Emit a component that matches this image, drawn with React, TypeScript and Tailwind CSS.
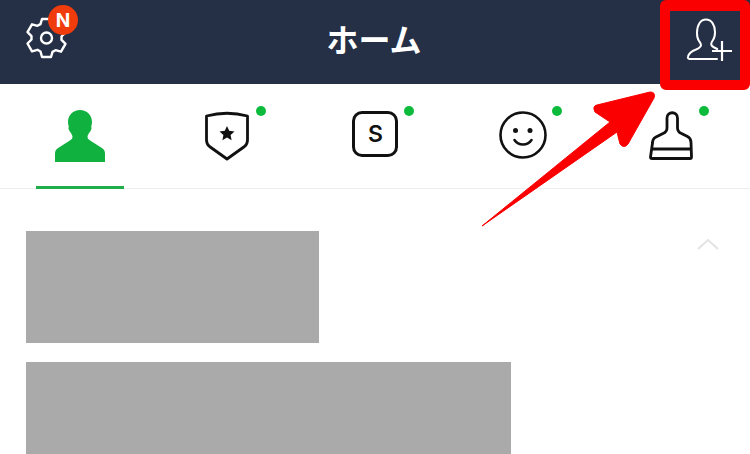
const Tab = ({ children, dot = true, active = false }: { children: React.ReactNode; dot?: boolean; active?: boolean }) => (
  <div className="relative flex flex-1 items-center justify-center h-full">
    <div className="relative w-[60px] h-[60px] flex items-center justify-center">
      {children}
      {dot && <span className="absolute left-[59px] top-0 w-[10px] h-[10px] rounded-full bg-[#0dbb3c]" />}
    </div>
    {active && <span className="absolute left-[30px] right-[30px] bottom-[-1px] h-[3px] bg-[#1fae4a]" />}
  </div>
)

export default function App() {
  return (
    <div className="relative w-[750px] h-[454px] overflow-hidden bg-white font-['Noto_Sans_CJK_JP',sans-serif]">
      {/* Header */}
      <header className="flex items-center justify-between h-[84px] bg-[#252f45] pl-[24px] pr-[16px]">
        <div className="relative w-[46px] h-[46px] mt-[-12px]">
          <svg width="46" height="46" viewBox="0 0 46 46" fill="none" stroke="white" strokeWidth="2.400" strokeLinejoin="round">
            <path d="M18 6h9l1.500 5.500 3 1.700 5.500-1.500 4.500 7.800-4 4v3.400l4 4-4.500 7.800-5.500-1.500-3 1.700L27 44h-9l-1.500-5.500-3-1.700-5.500 1.500-4.500-7.800 4-4v-3.400l-4-4 4.500-7.800 5.500 1.500 3-1.700z" />
            <circle cx="22.500" cy="25" r="5.500" />
          </svg>
          <span className="absolute left-[24px] top-[-8px] flex items-center justify-center w-[30px] h-[30px] rounded-full bg-[#f03c0c] text-white text-[19px] font-bold leading-none font-['Inter',sans-serif]">N</span>
        </div>
        <h1 className="text-white text-[32px] font-semibold leading-none mb-[8px] mr-[8px]">ホーム</h1>
        <svg width="48" height="48" viewBox="0 0 48 48" fill="none" stroke="white" strokeWidth="2" className="mt-[-4px]">
          <path d="M31 43H3.500c-1.300 0-2-1-1.500-2.500 1-3.500 4-5.500 8-7 3-1.300 5-2.500 5-4.500 0-1.500-1-2.500-2-4-1.500-2-2-5-2-8C11 9 14.500 3.500 20 3.500S29 9 29 16c0 3-.5 6-2 8-1 1.500-1.800 2.500-1.800 4 0 1.500 1 2.500 3 3.500l3 1.500" strokeLinecap="round" />
          <path d="M26 35h20M36 25v20" strokeWidth="2.200" />
        </svg>
      </header>

      {/* Tabs */}
      <nav className="flex h-[105px] px-[6px] border-b border-[#eeeeee]">
        <Tab active dot={false}>
          <svg width="50" height="52" viewBox="0 0 50 52" fill="#10b13e">
            <path d="M25 0c7 0 12 5 12 12 0 1.500-.2 3-.8 4.500.6 1 .4 3-1 5-1.300 1.800-2.700 3.500-2.700 5.500 0 1.500 1 2.500 3 3.800l11 7c2 1.300 3.500 3 3.500 5.700V52H0V43.500c0-2.700 1.500-4.400 3.500-5.700l11-7c2-1.300 3-2.300 3-3.800 0-2-1.400-3.700-2.700-5.500-1.400-2-1.600-4-1-5-.6-1.500-.8-3-.8-4.500C13 5 18 0 25 0z" />
          </svg>
        </Tab>
        <Tab>
          <svg width="46" height="52" viewBox="0 0 46 52" className="mt-[-1px]">
            <path d="M2.500 6Q23 .5 43.500 6V30c0 3-1 5-3 6.500L23 49 5.500 36.500c-2-1.500-3-3.500-3-6.500z" fill="none" stroke="#111" strokeWidth="2.800" strokeLinejoin="round" />
            <path d="M23 16l2.200 4.800 5.300.6-3.900 3.600 1 5.200-4.600-2.600-4.600 2.600 1-5.200-3.900-3.600 5.300-.6z" fill="#111" />
          </svg>
        </Tab>
        <Tab>
          <span className="flex items-center justify-center w-[46px] h-[46px] mt-[-4px] ml-[1px] rounded-[10px] border-[3px] border-[#111] text-[#111] text-[23px] font-semibold leading-none font-['Inter',sans-serif]">S</span>
        </Tab>
        <Tab>
          <svg width="48" height="48" viewBox="0 0 48 48" fill="none" stroke="#111" strokeWidth="2.600" className="mt-[-3px]">
            <circle cx="24" cy="24" r="22.500" />
            <circle cx="16.500" cy="19.500" r="2.500" fill="#111" stroke="none" />
            <circle cx="31" cy="19.500" r="2.500" fill="#111" stroke="none" />
            <path d="M15.500 29c2 3 4.500 4.500 8.500 4.500s6.500-1.500 8.500-4.500" strokeLinecap="round" />
          </svg>
        </Tab>
        <Tab>
          <svg width="46" height="52" viewBox="0 0 46 52" fill="none" stroke="#111" strokeWidth="2.800" strokeLinejoin="round" className="ml-[3px]">
            <path d="M18 18V8c0-7 10.500-7 10.500 0V18c0 3 1.500 4.500 4 5.500l6 3c2 1 3.500 3 3.500 6L42.500 47q0 1.500-1.500 1.500H3q-1.500 0-1.500-1.500L3.500 33c0-3 1.500-5 3.500-6l7-3.500c2.500-1 4-2.500 4-5.500z" />
            <path d="M3 39h39" />
          </svg>
        </Tab>
      </nav>

      {/* Content */}
      <main className="relative pt-[42px] pl-[26px]">
        <div className="w-[293px] h-[112px] bg-[#aaaaaa]" />
        <div className="w-[485px] h-[112px] mt-[19px] bg-[#aaaaaa]" />
        <svg width="22" height="12" viewBox="0 0 22 12" fill="none" stroke="#e3e3e3" strokeWidth="2" className="absolute left-[697px] top-[49px]">
          <path d="M1 11l10-9 10 9" />
        </svg>
      </main>

      {/* Annotation */}
      <div className="absolute left-[660px] top-0 w-[90px] h-[90px] border-[10px] border-t-[11px] border-[#fa0000] rounded-[6px]" />
      <svg width="750" height="454" viewBox="0 0 750 454" className="absolute left-0 top-0 pointer-events-none">
        <path d="M482 226L610 122 595 112Q592 106 597 105L650 92Q656 92 654 98L628 144Q624 149 620 144L617 132z" fill="#fa0000" stroke="#fa0000" strokeWidth="1" strokeLinejoin="round" />
      </svg>
    </div>
  )
}
